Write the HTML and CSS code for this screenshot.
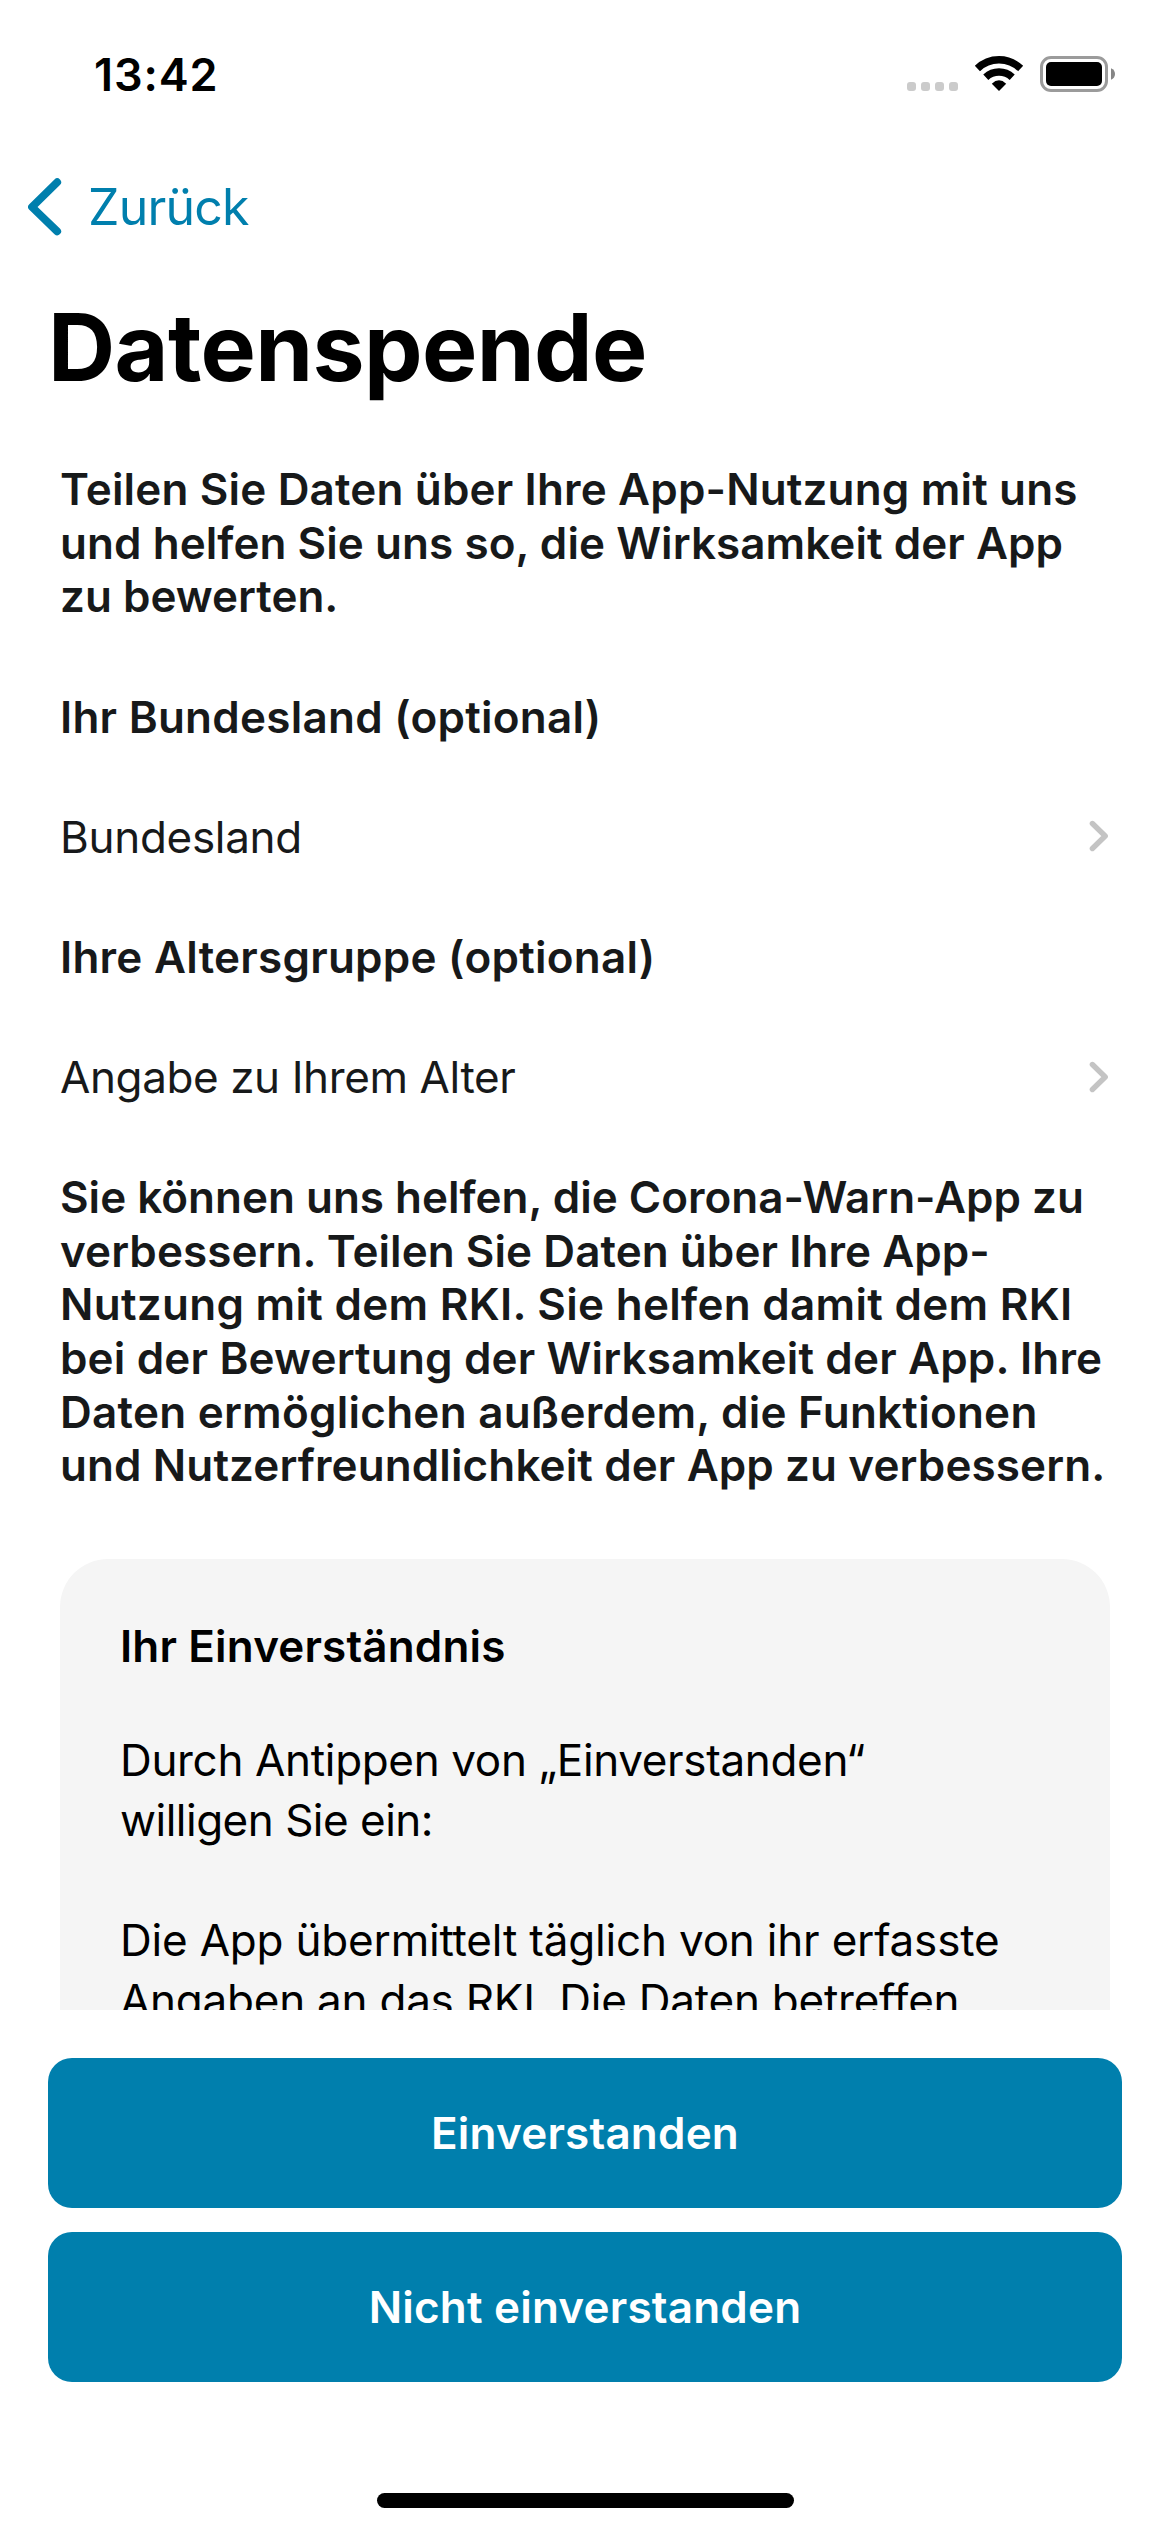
FILE: index.html
```
<!DOCTYPE html>
<html lang="de">
<head>
<meta charset="utf-8">
<title>Datenspende</title>
<link rel="stylesheet" href="styles.css">
</head>
<body>
<div class="screen">
  <header class="header">
    <div class="status">
      <time class="clock">13:42</time>
      <svg class="status-icons" width="210" height="40" viewBox="906 54 210 40" aria-hidden="true">
        <g fill="#cbcbcb">
          <rect x="907" y="82" width="9" height="9" rx="3"/>
          <rect x="921" y="82" width="9" height="9" rx="3"/>
          <rect x="935" y="82" width="9" height="9" rx="3"/>
          <rect x="949" y="82" width="9" height="9" rx="3"/>
        </g>
        <g fill="none" stroke="#000" stroke-width="7.4">
          <path d="M977.4 68.5A31 31 0 0 1 1020.6 68.5"/>
          <path d="M985.8 77.2A19.3 19.3 0 0 1 1012.2 77.2"/>
        </g>
        <path d="M991.8 83.7Q999 77 1006.2 83.7L999 91z"/>
        <rect x="1041.5" y="57.5" width="65" height="33" rx="9.5" fill="none" stroke="#9b9b9b" stroke-width="3"/>
        <rect x="1046" y="62" width="56" height="24" rx="5"/>
        <path d="M1111 68.2Q1115 70 1115 74Q1115 78 1111 79.8z" fill="#868686"/>
      </svg>
    </div>
    <a class="back">
      <svg width="34" height="58" viewBox="0 0 34 58" aria-hidden="true"><path d="M29.2 4.2L4 29L29.2 53.4" fill="none" stroke="currentColor" stroke-width="7.8" stroke-linecap="round" stroke-linejoin="round"/></svg>
      <span>Zurück</span>
    </a>
    <h1 class="title">Datenspende</h1>
  </header>

  <main class="content">
    <p class="strong"><span class="ls-15">Teilen Sie Daten über Ihre App-Nutzung mit uns</span><br><span class="ls-5">und helfen Sie uns so, die Wirksamkeit der App</span><br>zu bewerten.</p>
    <h2 class="strong ls-25">Ihr Bundesland (optional)</h2>
    <div class="row"><span class="ls-n30">Bundesland</span>
      <svg class="chevron" width="20" height="34" viewBox="0 0 20 34" aria-hidden="true"><path d="M3.4 3.5L16.2 16L3.4 28.5"/></svg>
    </div>
    <h2 class="strong ls-25">Ihre Altersgruppe (optional)</h2>
    <div class="row"><span class="ls-n40">Angabe zu Ihrem Alter</span>
      <svg class="chevron" width="20" height="34" viewBox="0 0 20 34" aria-hidden="true"><path d="M3.4 3.5L16.2 16L3.4 28.5"/></svg>
    </div>
    <p class="strong">Sie können uns helfen, die Corona-Warn-App zu<br><span class="ls-5">verbessern. Teilen Sie Daten über Ihre App-</span><br><span class="ls-30">Nutzung mit dem RKI. Sie helfen damit dem RKI</span><br><span class="ls-15">bei der Bewertung der Wirksamkeit der App. Ihre</span><br><span class="ls-25">Daten ermöglichen außerdem, die Funktionen</span><br><span class="ls-10">und Nutzerfreundlichkeit der App zu verbessern.</span></p>
    <section class="card">
      <h2 class="strong ls-15">Ihr Einverständnis</h2>
      <p><span class="ls-n35">Durch Antippen von „Einverstanden“</span><br><span class="ls-n50">willigen Sie ein:</span></p>
      <p><span class="ls-n20">Die App übermittelt täglich von ihr erfasste</span><br><span class="ls-n25">Angaben an das RKI. Die Daten betreffen</span></p>
    </section>
  </main>

  <footer class="actions">
    <button class="button">Einverstanden</button>
    <button class="button">Nicht einverstanden</button>
    <div class="home-indicator"></div>
  </footer>
</div>
</body>
</html>
```
FILE: styles.css
```
* { box-sizing: border-box; margin: 0; padding: 0; }

body {
  background: #fff;
  color: #17191a;
  font-family: Inter, "Liberation Sans", sans-serif;
  font-size: 44px;
  line-height: 53.7px;
}

.screen {
  display: flex;
  flex-direction: column;
  width: 1170px;
  height: 2532px;
  overflow: hidden;
}

.header {
  flex: none;
  height: 463px;
  padding-top: 45px;
}

.status {
  display: flex;
  justify-content: space-between;
  height: 60px;
  padding: 0 54px 0 94px;
  color: #000;
}

.clock {
  font-size: 45px;
  font-weight: 600;
  line-height: 60px;
  letter-spacing: 0.9px;
}

.status-icons { margin-top: 9px; }

.back {
  display: flex;
  align-items: center;
  height: 60px;
  margin-top: 72px;
  padding-left: 28px;
  gap: 26px;
  color: #007fad;
  font-size: 50px;
  line-height: 60px;
  letter-spacing: -0.8px;
}

.title {
  margin-top: 55px;
  padding-left: 48px;
  color: #000;
  font-size: 93px;
  font-weight: 700;
  line-height: 110px;
  letter-spacing: -0.62px;
}

.content {
  display: flex;
  flex: none;
  flex-direction: column;
  gap: 66.4px;
  height: 1547px;
  padding: 0 60px;
  overflow: hidden;
  white-space: nowrap;
}

.content > * { flex: none; }

.strong {
  font-size: 44px;
  font-weight: 600;
}

.row {
  display: flex;
  align-items: center;
  justify-content: space-between;
  height: 53.7px;
}

.chevron {
  margin-right: 1px;
  fill: none;
  stroke: #c4c4c4;
  stroke-width: 5.4;
  stroke-linecap: round;
  stroke-linejoin: round;
}

.card {
  display: flex;
  flex-direction: column;
  gap: 60px;
  height: 900px;
  margin-top: -0.6px;
  padding: 60px;
  border-radius: 48px;
  background: #f5f5f5;
  color: #000;
  line-height: 60px;
}

.card h2 {
  margin-bottom: -3px;
  line-height: 54px;
}

.actions {
  display: flex;
  flex: none;
  flex-direction: column;
  gap: 24px;
  height: 522px;
  padding: 48px 48px 0;
}

.button {
  height: 150px;
  border: 0;
  border-radius: 24px;
  background: #007fad;
  color: #fff;
  font: 600 44px/54px Inter, "Liberation Sans", sans-serif;
  letter-spacing: 0.2px;
}

.home-indicator {
  align-self: center;
  width: 417px;
  height: 15px;
  margin-top: 87px;
  border-radius: 8px;
  background: #000;
}

/* Tracking adjustments */
.ls-5 { letter-spacing: 0.06px; }
.ls-10 { letter-spacing: 0.11px; }
.ls-15 { letter-spacing: 0.16px; }
.ls-25 { letter-spacing: 0.25px; }
.ls-30 { letter-spacing: 0.29px; }
.ls-n20 { letter-spacing: -0.19px; }
.ls-n25 { letter-spacing: -0.24px; }
.ls-n30 { letter-spacing: -0.3px; }
.ls-n35 { letter-spacing: -0.34px; }
.ls-n40 { letter-spacing: -0.4px; }
.ls-n50 { letter-spacing: -0.5px; }
```
